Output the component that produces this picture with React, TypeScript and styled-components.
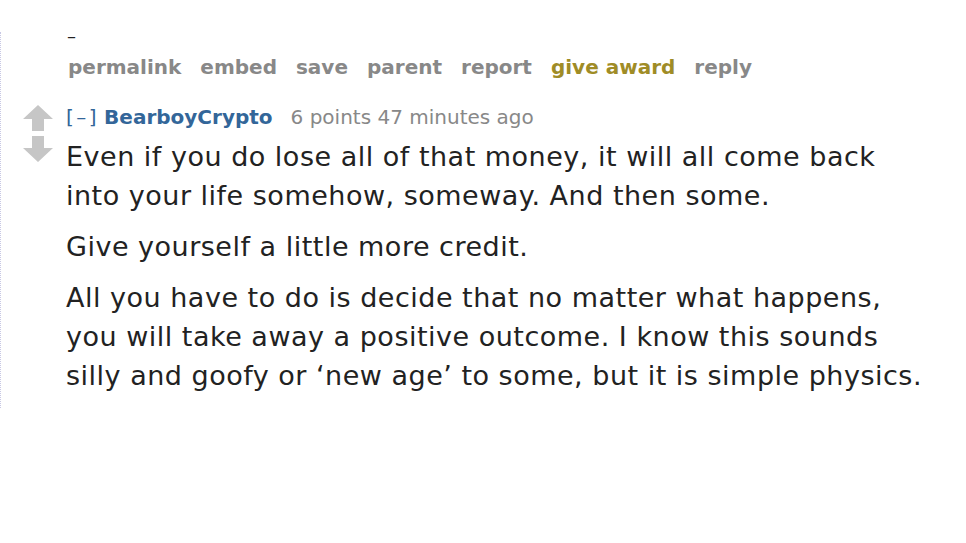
import React from 'react';
import styled, { createGlobalStyle } from 'styled-components';

const GlobalStyle = createGlobalStyle`
  body {
    margin: 0;
    background: #fff;
    font-family: "DejaVu Sans", Verdana, sans-serif;
  }
`;

const Thread = styled.div`
  margin-top: 32px;
  border-left: 1px dotted #c8c8e4;
  height: 376px;
`;

const Tail = styled.div`
  padding-left: 66px;
  height: 20px;
  font-size: 18px;
  line-height: 8px;
  color: #222;
`;

const Buttons = styled.ul`
  list-style: none;
  margin: 0;
  padding: 0 0 0 67px;
  display: flex;
  gap: 19px;
  height: 30px;
  align-items: center;
`;

const ButtonLink = styled.li<{ $gold?: boolean }>`
  font-size: 20px;
  font-weight: bold;
  color: ${p => (p.$gold ? '#9f8c26' : '#888')};
`;

const Comment = styled.div`
  display: flex;
  margin-top: 22px;
`;

const Midcol = styled.div`
  width: 65px;
  flex-shrink: 0;
  display: flex;
  flex-direction: column;
  align-items: flex-start;
  padding-left: 22px;
  box-sizing: border-box;
  padding-top: 1px;
  gap: 5px;
`;

const Entry = styled.div`
  flex: 1;
`;

const Tagline = styled.p`
  margin: 0;
  font-size: 20px;
  line-height: 26px;
  color: #888;
`;

const Expand = styled.span`
  color: #369;
  letter-spacing: 2.5px;
  margin-right: 5px;
`;

const Author = styled.span`
  color: #369;
  font-weight: bold;
  margin-right: 18px;
`;

const Body = styled.div`
  color: #222;
  font-size: 27px;
  line-height: 39px;
  letter-spacing: 0.5px;
  margin-top: 7px;

  p {
    margin: 0 0 12px;
  }
`;

const Arrow = ({ down }: { down?: boolean }) => (
  <svg width="30" height="26" viewBox="0 0 30 26" style={down ? { transform: 'scaleY(-1)' } : undefined}>
    <path d="M15 0 L30 14 L21 14 L21 26 L9 26 L9 14 L0 14 Z" fill="#c6c6c6" />
  </svg>
);

export default function App() {
  return (
    <>
      <GlobalStyle />
      <Thread>
        <Tail>–</Tail>
        <Buttons>
          <ButtonLink>permalink</ButtonLink>
          <ButtonLink>embed</ButtonLink>
          <ButtonLink>save</ButtonLink>
          <ButtonLink>parent</ButtonLink>
          <ButtonLink>report</ButtonLink>
          <ButtonLink $gold>give award</ButtonLink>
          <ButtonLink>reply</ButtonLink>
        </Buttons>
        <Comment>
          <Midcol>
            <Arrow />
            <Arrow down />
          </Midcol>
          <Entry>
            <Tagline>
              <Expand>[–]</Expand>
              <Author>BearboyCrypto</Author>
              6 points 47 minutes ago
            </Tagline>
            <Body>
              <p>
                Even if you do lose all of that money, it will all come back
                <br />
                into your life somehow, someway. And then some.
              </p>
              <p>Give yourself a little more credit.</p>
              <p>
                All you have to do is decide that no matter what happens,
                <br />
                you will take away a positive outcome. I know this sounds
                <br />
                silly and goofy or ‘new age’ to some, but it is simple physics.
              </p>
            </Body>
          </Entry>
        </Comment>
      </Thread>
    </>
  );
}
